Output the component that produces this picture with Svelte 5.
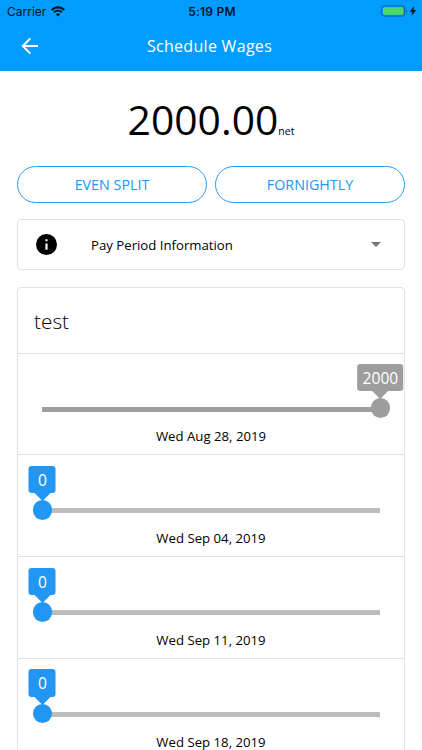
<script lang="ts">
	type Period = {
		date: string;
		amount: number;
		locked?: boolean;
	};

	const total = 2000;

	const periods: Period[] = [
		{ date: 'Wed Aug 28, 2019', amount: 2000, locked: true },
		{ date: 'Wed Sep 04, 2019', amount: 0 },
		{ date: 'Wed Sep 11, 2019', amount: 0 },
		{ date: 'Wed Sep 18, 2019', amount: 0 }
	];
</script>

<div class="screen">
	<header class="header">
		<div class="status">
			<div class="status-side">
				<span>Carrier</span>
				<svg class="wifi" viewBox="0 0 14 11" width="14" height="11" fill="none">
					<path d="M0.8 3.9a8.8 8.8 0 0 1 12.4 0" stroke="currentColor" stroke-width="2.1" />
					<path d="M3 6.3a5.7 5.7 0 0 1 8 0" stroke="currentColor" stroke-width="1.9" />
					<path d="M7 10.4 4.9 8.2a3 3 0 0 1 4.2 0z" fill="currentColor" />
				</svg>
			</div>
			<span class="clock">5:19 PM</span>
			<div class="status-side end">
				<svg viewBox="0 0 36 12" width="36" height="12">
					<rect x="0.6" y="0.9" width="23" height="10.2" rx="2.6" fill="none" stroke="#0b63a8" stroke-width="1" />
					<rect x="2" y="2.3" width="20.2" height="7.4" rx="1.4" fill="#4cd964" />
					<path d="M24.9 4.2c1.5.6 1.5 3 0 3.6z" fill="#0b63a8" />
					<path d="M33.2 0.9 28.8 6.7h2.6L30.4 11.1 35.2 5h-2.7z" fill="#04121f" />
				</svg>
			</div>
		</div>
		<div class="toolbar">
			<button class="back" type="button" aria-label="Back">
				<svg viewBox="0 0 18 18" width="18" height="18" fill="none" stroke="#fff" stroke-width="2">
					<path d="M17 9H2M9.3 1.4 1.8 9l7.5 7.6" />
				</svg>
			</button>
			<h1>Schedule Wages</h1>
		</div>
	</header>

	<main>
		<p class="total">{total.toFixed(2)}<small>net</small></p>

		<div class="actions">
			<button type="button">EVEN SPLIT</button>
			<button type="button">FORNIGHTLY</button>
		</div>

		<button class="info" type="button">
			<svg viewBox="0 0 20 20" width="21" height="21">
				<circle cx="10" cy="10" r="10" />
				<path d="M9 9h2v6H9zM9 5h2v2H9z" fill="#fff" />
			</svg>
			<span>Pay Period Information</span>
			<svg class="caret" viewBox="0 0 10 5" width="10" height="5"><path d="M0 0h10L5 5z" /></svg>
		</button>

		<section class="card">
			<h2>test</h2>
			{#each periods as period (period.date)}
				<div class="period" class:locked={period.locked}>
					<div class="slider">
						<div class="thumb" style:left="{(period.amount / total) * 100}%">
							<span class="pin">{period.amount}</span>
						</div>
					</div>
					<p>{period.date}</p>
				</div>
			{/each}
		</section>
	</main>
</div>

<style>
	:global(body) {
		margin: 0;
		background: #fff;
	}

	.screen {
		box-sizing: border-box;
		height: 750px;
		overflow: hidden;
		font-family: 'Open Sans', 'Noto Sans', sans-serif;
		color: #000;
	}

	button {
		margin: 0;
		padding: 0;
		border: 0;
		background: none;
		font: inherit;
		color: inherit;
	}

	svg {
		display: block;
	}

	h1,
	h2,
	p {
		margin: 0;
		font-weight: 400;
	}

	.header {
		box-sizing: border-box;
		height: 71px;
		background: #019dfe;
	}

	.status {
		display: grid;
		grid-template-columns: 1fr auto 1fr;
		align-items: center;
		height: 22px;
		padding: 0 5px 0 7px;
		font-family: Inter, sans-serif;
		font-size: 12px;
		color: #04121f;
	}

	.status-side {
		display: flex;
		align-items: center;
		gap: 5px;
	}

	.end {
		justify-content: flex-end;
	}

	.clock {
		font-weight: 600;
		letter-spacing: 0.2px;
	}

	.toolbar {
		display: grid;
		grid-template-columns: 39px 1fr 42px;
		align-items: center;
		height: 48px;
	}

	.back {
		padding-left: 21px;
	}

	h1 {
		font-size: 16px;
		letter-spacing: 0.3px;
		text-align: center;
		color: #fff;
	}

	main {
		padding: 0 17px;
	}

	.total {
		padding-top: 19px;
		font-size: 40.8px;
		line-height: 58px;
		text-align: center;
	}

	.total small {
		font-size: 10.5px;
		line-height: 1;
	}

	.actions {
		display: grid;
		grid-template-columns: 1fr 1fr;
		gap: 8px;
		margin-top: 18px;
	}

	.actions button {
		height: 37px;
		border: 1px solid #2a9cec;
		border-radius: 19px;
		font-size: 14.3px;
		color: #2196f3;
	}

	.info {
		box-sizing: border-box;
		display: flex;
		align-items: center;
		width: 100%;
		height: 51px;
		margin-top: 16px;
		padding: 0 23px 0 18px;
		border: 1px solid #e2e2e2;
		border-radius: 4px;
		font-size: 13.2px;
	}

	.info span {
		margin-left: 34px;
	}

	.caret {
		margin-left: auto;
		fill: #757575;
	}

	.card {
		margin-top: 17px;
		border: 1px solid #e2e2e2;
		border-radius: 4px;
	}

	h2 {
		height: 64.5px;
		padding-left: 16px;
		font-size: 20.8px;
		font-weight: 300;
		line-height: 66px;
	}

	.period {
		box-sizing: border-box;
		height: 101.8px;
		padding: 53px 24px 0;
		border-top: 1px solid #e2e2e2;
		--accent: #2196f3;
		--track: #bdbdbd;
	}

	.locked {
		--accent: #9e9e9e;
		--track: #9e9e9e;
	}

	.slider {
		position: relative;
		height: 5px;
		background: var(--track);
	}

	.thumb {
		position: absolute;
		top: -8.2px;
		width: 19.6px;
		height: 19.6px;
		margin-left: -9.4px;
		border-radius: 50%;
		background: var(--accent);
	}

	.pin {
		position: absolute;
		bottom: 26.6px;
		left: 50%;
		min-width: 17px;
		padding: 1px 5px 0;
		border-radius: 3px;
		font-size: 15.6px;
		line-height: 26.4px;
		text-align: center;
		color: #fff;
		background: var(--accent);
		transform: translateX(-50%);
	}

	.pin::after {
		content: '';
		position: absolute;
		top: 100%;
		left: 50%;
		margin-left: -8px;
		border: 8px solid transparent;
		border-bottom: 0;
		border-top-color: var(--accent);
	}

	.period p {
		margin-top: 14.7px;
		font-size: 13.2px;
		line-height: 20px;
		text-align: center;
	}
</style>
